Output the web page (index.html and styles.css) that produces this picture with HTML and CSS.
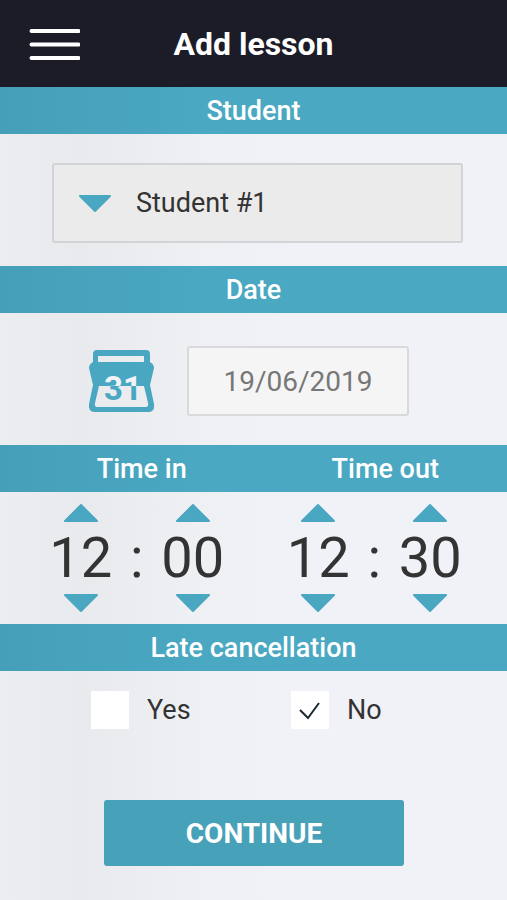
FILE: index.html
```html
<!DOCTYPE html>
<html lang="en">
<head>
<meta charset="utf-8">
<meta name="viewport" content="width=device-width, initial-scale=1">
<title>Add lesson</title>
<link rel="stylesheet" href="styles.css">
</head>
<body>
<header class="topbar">
  <button class="menu" type="button" aria-label="Menu">
    <svg width="52" height="34" viewBox="0 0 52 34" aria-hidden="true"><path d="M3.500 4H50.500M3.500 17.500H50.500M3.500 31H50.500" fill="none" stroke="#fff" stroke-width="4" stroke-linecap="round"/></svg>
  </button>
  <h1 class="title">Add lesson</h1>
</header>
<form class="lesson">
  <h2 class="band"><label for="student">Student</label></h2>
  <div class="panel panel-student">
    <div class="picker">
      <select id="student" class="picker-field"><option>Student #1</option></select>
      <svg class="picker-arrow" width="34" height="19" viewBox="0 0 34 19" aria-hidden="true"><path d="M2 2H32L17 17Z"/></svg>
    </div>
  </div>

  <h2 class="band"><label for="date">Date</label></h2>
  <div class="panel panel-date">
    <button class="calendar" type="button" aria-label="Open calendar">
      <svg width="66" height="62" viewBox="0 0 66 62" aria-hidden="true">
        <defs>
          <linearGradient id="flip" gradientUnits="userSpaceOnUse" x1="0" y1="0" x2="0" y2="62">
            <stop offset="0.58" stop-color="#f2f3f6"/>
            <stop offset="0.58" stop-color="#49a7c1"/>
          </linearGradient>
        </defs>
        <path fill="#49a7c1" fill-rule="evenodd" d="M8 0H57Q61 0 61 4V12Q65 14 65 18L61 35L65 54Q66 62 59 62H6Q-1 62 0 54L4 35L0 18Q0 14 4 12V4Q4 0 8 0ZM9 6V12H55V6ZM10 36L6 53Q5 57 9 57H56Q60 57 59 53L55 36Z"/>
        <text class="calendar-day" x="34" y="50" text-anchor="middle" fill="url(#flip)">31</text>
      </svg>
    </button>
    <input id="date" class="date-field" type="text" value="19/06/2019">
  </div>

  <div class="band band-split"><h2 class="band-label">Time in</h2><h2 class="band-label">Time out</h2></div>
  <div class="panel panel-time">
    <div class="clock" role="group" aria-label="Time in">
      <button class="step" type="button" aria-label="Hour in up"><svg width="36" height="20" viewBox="0 0 36 20"><path d="M2 18H34L18 2Z"/></svg></button>
      <span></span>
      <button class="step" type="button" aria-label="Minute in up"><svg width="36" height="20" viewBox="0 0 36 20"><path d="M2 18H34L18 2Z"/></svg></button>
      <input class="digits" type="text" inputmode="numeric" aria-label="Hour in" value="12">
      <span class="colon">:</span>
      <input class="digits" type="text" inputmode="numeric" aria-label="Minute in" value="00">
      <button class="step" type="button" aria-label="Hour in down"><svg width="36" height="20" viewBox="0 0 36 20"><path d="M2 2H34L18 18Z"/></svg></button>
      <span></span>
      <button class="step" type="button" aria-label="Minute in down"><svg width="36" height="20" viewBox="0 0 36 20"><path d="M2 2H34L18 18Z"/></svg></button>
    </div>
    <div class="clock" role="group" aria-label="Time out">
      <button class="step" type="button" aria-label="Hour out up"><svg width="36" height="20" viewBox="0 0 36 20"><path d="M2 18H34L18 2Z"/></svg></button>
      <span></span>
      <button class="step" type="button" aria-label="Minute out up"><svg width="36" height="20" viewBox="0 0 36 20"><path d="M2 18H34L18 2Z"/></svg></button>
      <input class="digits" type="text" inputmode="numeric" aria-label="Hour out" value="12">
      <span class="colon">:</span>
      <input class="digits" type="text" inputmode="numeric" aria-label="Minute out" value="30">
      <button class="step" type="button" aria-label="Hour out down"><svg width="36" height="20" viewBox="0 0 36 20"><path d="M2 2H34L18 18Z"/></svg></button>
      <span></span>
      <button class="step" type="button" aria-label="Minute out down"><svg width="36" height="20" viewBox="0 0 36 20"><path d="M2 2H34L18 18Z"/></svg></button>
    </div>
  </div>

  <h2 class="band">Late cancellation</h2>
  <div class="choices">
    <label class="choice">
      <span class="box"><input class="tick" type="checkbox"><svg class="mark" width="38" height="38" viewBox="0 0 38 38" aria-hidden="true"><path d="M9 19L17 27L28 12"/></svg></span>
      Yes
    </label>
    <label class="choice">
      <span class="box"><input class="tick" type="checkbox" checked><svg class="mark" width="38" height="38" viewBox="0 0 38 38" aria-hidden="true"><path d="M9 19L17 27L28 12"/></svg></span>
      No
    </label>
  </div>
  <div class="actions"><button class="continue" type="submit">CONTINUE</button></div>
</form>
</body>
</html>
```
FILE: styles.css
```css
* {
  box-sizing: border-box;
}

body {
  margin: 0;
  min-height: 100vh;
  background: linear-gradient(90deg, #ecedf0 0, #e9eaed 16%, #eff0f4 40%, #f1f2f7 60%);
  color: #333;
  font-family: Roboto, sans-serif;
  font-size: 27px;
}

button,
input,
select {
  margin: 0;
  padding: 0;
  border: 0;
  border-radius: 0;
  background: none;
  color: inherit;
  font: inherit;
  appearance: none;
}

svg {
  display: block;
}

h1,
h2 {
  margin: 0;
}

.topbar {
  display: grid;
  grid-template-columns: 1fr auto 1fr;
  align-items: center;
  height: 87px;
  padding: 0 28px;
  background: #1c1b28;
  color: #fff;
}

.menu {
  justify-self: start;
}

.title {
  font-size: 32px;
  font-weight: 700;
}

.band {
  display: flex;
  align-items: center;
  justify-content: center;
  height: 47px;
  background: linear-gradient(90deg, #469fb9, #4aa8c2 40%);
  color: #fff;
  font-size: 27px;
  font-weight: 500;
}

.band-split {
  display: grid;
  grid-template-columns: 1fr 1fr;
  padding-left: 20px;
}

.band-label {
  font-size: 27px;
  font-weight: 500;
  text-align: center;
}

.panel {
  height: 132px;
}

.panel-student {
  padding: 29px 44px 0 52px;
}

.picker {
  display: grid;
  align-items: center;
}

.picker-field {
  grid-area: 1 / 1;
  width: 100%;
  height: 80px;
  padding-left: 82px;
  border: 2px solid #d2d3d6;
  border-radius: 3px;
  background: #ebebeb;
}

.picker-arrow {
  grid-area: 1 / 1;
  margin-left: 26px;
  pointer-events: none;
}

.picker-arrow path,
.step path {
  fill: #49a7c1;
  stroke: #49a7c1;
  stroke-width: 2;
  stroke-linejoin: round;
}

.panel-date {
  display: flex;
  align-items: center;
  gap: 32px;
  padding: 4px 98px 0 89px;
}

.calendar-day {
  font-size: 33px;
  font-weight: 700;
}

.date-field {
  flex: 1;
  min-width: 0;
  height: 70px;
  border: 2px solid #d8d9db;
  border-radius: 3px;
  background: #f5f5f6;
  color: #777;
  font-size: 28px;
  text-align: center;
}

.panel-time {
  display: grid;
  grid-template-columns: 1fr 1fr;
  padding: 11px 14px 0 18px;
}

.clock {
  display: grid;
  grid-template-columns: 72px 40px 72px;
  grid-template-rows: 20px 70px 20px;
  justify-content: center;
}

.step {
  justify-self: center;
}

.digits {
  width: 100%;
  font-size: 56px;
  text-align: center;
}

.colon {
  font-size: 56px;
  line-height: 70px;
  text-align: center;
}

.choices {
  display: grid;
  grid-template-columns: 200px 1fr;
  padding: 20px 0 0 91px;
}

.choice {
  display: flex;
  align-items: center;
  gap: 18px;
}

.box {
  display: grid;
}

.tick {
  grid-area: 1 / 1;
  width: 38px;
  height: 38px;
  background: #fff;
}

.mark {
  grid-area: 1 / 1;
  visibility: hidden;
  fill: none;
  stroke: #17282e;
  stroke-width: 2;
  pointer-events: none;
}

.tick:checked + .mark {
  visibility: visible;
}

.actions {
  padding: 71px 103px 34px 104px;
}

.continue {
  width: 100%;
  height: 66px;
  border-radius: 3px;
  background: #47a1b8;
  color: #fff;
  font-size: 28px;
  font-weight: 700;
}
```
